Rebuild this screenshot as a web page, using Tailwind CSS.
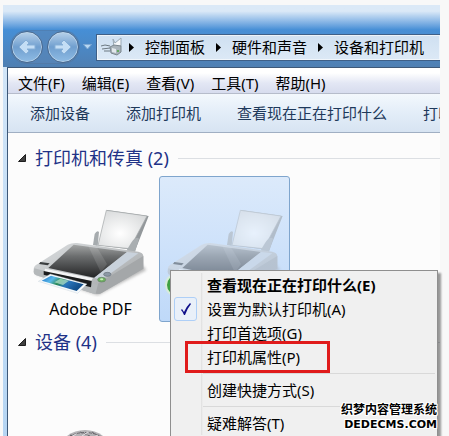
<!DOCTYPE html>
<html lang="zh-CN">
<head>
  <meta charset="UTF-8">
  <meta name="viewport" content="width=device-width, initial-scale=1">
  <title>设备和打印机</title>
  <script src="https://cdn.jsdelivr.net/npm/@tailwindcss/browser@4"></script>
</head>
<body class="h-screen overflow-hidden bg-[#f8f8f8] font-['Noto_Sans','Noto_Sans_CJK_SC',sans-serif] text-[15px] leading-6 text-black">

  <!-- Shared shapes -->
  <svg class="absolute size-0" aria-hidden="true">
    <defs>
      <linearGradient id="top" x1="0" y1="0" x2="0" y2="1">
        <stop offset="0" stop-color="#a3a5a5"/>
        <stop offset="0.35" stop-color="#6c6e6f"/>
        <stop offset="1" stop-color="#232425"/>
      </linearGradient>
      <linearGradient id="side" x1="0" y1="0" x2="1" y2="1">
        <stop offset="0" stop-color="#dcdfe1"/>
        <stop offset="1" stop-color="#9fa2a4"/>
      </linearGradient>
      <radialGradient id="sheet" cx="0.45" cy="0.6" r="0.7">
        <stop offset="0" stop-color="#ffffff"/>
        <stop offset="1" stop-color="#d6d8d9"/>
      </radialGradient>
      <linearGradient id="photo" x1="0" y1="0" x2="1" y2="0.4">
        <stop offset="0" stop-color="#1c6fc4"/>
        <stop offset="0.3" stop-color="#59b7ea"/>
        <stop offset="0.5" stop-color="#2b8a52"/>
        <stop offset="0.7" stop-color="#2a76bd"/>
        <stop offset="1" stop-color="#14508c"/>
      </linearGradient>
      <filter id="soft" x="-10%" y="-30%" width="120%" height="160%"><feGaussianBlur stdDeviation="5"/></filter>
    </defs>
    <symbol id="printer" viewBox="90 99 360 270">
      <path d="M104 300 L290 364 L436 288 L420 270 L120 280Z" fill="#8b8b8b" opacity="0.6" filter="url(#soft)"/>
      <path d="M318 108 L443 126 L402 230 L384 226 L292 214Z" fill="#93989b"/>
      <path d="M316 109 L438 126 L386 224 L291 214Z" fill="url(#sheet)" stroke="#a2a6a8" stroke-width="2"/>
      <path d="M276 213 L281 180 Q288 168 294 174 L290 216Z" fill="#a6abae"/>
      <path d="M376 230 L392 204 Q406 186 414 194 L402 234Z" fill="#a9aeb1"/>
      <path d="M98 286 Q98 276 110 270 L200 212 Q212 206 228 207 L412 233 Q426 236 427 246 L427 284 L300 358 Q288 361 274 358 L106 304 Q98 301 98 294Z" fill="url(#side)"/>
      <path d="M100 283 L288 332 L300 358 Q288 361 274 358 L106 304 Q98 301 98 294Z" fill="#b4b8ba"/>
      <path d="M292 328 L427 246 L427 284 L300 358 Q290 361 284 358Z" fill="#a4a7a9"/>
      <path d="M142 282 L218 212 L378 234 L280 311Z" fill="url(#top)"/>
      <path d="M262 217 L288 220 L318 270 L300 296Z" fill="#ffffff" opacity="0.12"/>
      <path d="M280 311 L378 234 L412 238 L302 318Z" fill="#c9d2dc"/>
      <path d="M132 284 L276 313 L270 321 L130 293Z" fill="#f3f4f5"/>
      <path d="M128 291 L272 321 L270 340 L246 334 L128 302Z" fill="#1b1c1d"/>
      <path d="M148 300 L258 330 L230 358 L112 322Z" fill="#f4f9fc" stroke="#b9c6cf"/>
      <path d="M150 305 L248 331 L227 351 L122 320Z" fill="url(#photo)"/>
      <path d="M178 314 L204 320 L186 333 L160 325Z" fill="#b6e2cf" opacity="0.7"/>
      <path d="M118 264 L146 268 L140 274 L114 270Z" fill="#3b3e40"/>
      <ellipse cx="319" cy="301" rx="11" ry="6" fill="#8c98a5" stroke="#667078" stroke-width="2"/>
      <ellipse cx="302" cy="317" rx="12" ry="7" fill="#70b061" stroke="#64806a" stroke-width="2"/>
      <ellipse cx="302" cy="316" rx="5" ry="3" fill="#c6edb7"/>
    </symbol>
    <symbol id="crumb" viewBox="0 0 5 9">
      <path d="M0 0 L5 4.500 L0 9Z" fill="#000"/>
    </symbol>
    <symbol id="expanded" viewBox="0 0 8 8">
      <path d="M7.500 0.500 V7.500 H0.500Z" fill="#404040" stroke="#1e1e1e"/>
    </symbol>
  </svg>

  <div class="mt-[5px] mr-[9px] ml-[3px] flex h-full flex-col bg-linear-to-b from-[#7f9fc4] via-[#d3e6f8] via-10% to-[#b5d5f3]">

    <!-- Title bar with navigation -->
    <header class="flex h-[62px] shrink-0 items-center bg-linear-to-b from-[#dbe9f7] from-10% via-[#468fd6] via-40% to-[#4f7fb2] pt-[22px] pl-2">
      <nav class="flex w-full items-center" aria-label="导航">
        <div class="flex gap-1 rounded-full bg-[#5a86b5]/60 ring-1 ring-[#55779f]/60">
          <button type="button" aria-label="后退" class="size-8 rounded-full border border-[#49698f] bg-linear-to-b from-[#b9d2ea] via-[#709fcf] to-[#8fbce5] ring-1 ring-[#c3d9ee]/80 ring-inset">
            <svg class="mx-auto size-5" viewBox="0 0 20 20"><path d="M9 3 L2 10 L9 17 L12 14 L10 12 H18 V8 H10 L12 6Z" fill="#c4def5" stroke="#86afd7"/></svg>
          </button>
          <button type="button" aria-label="前进" class="size-8 rounded-full border border-[#49698f] bg-linear-to-b from-[#b9d2ea] via-[#709fcf] to-[#8fbce5] ring-1 ring-[#c3d9ee]/80 ring-inset">
            <svg class="mx-auto size-5" viewBox="0 0 20 20"><path d="M11 3 L18 10 L11 17 L8 14 L10 12 H2 V8 H10 L8 6Z" fill="#c4def5" stroke="#86afd7"/></svg>
          </button>
        </div>
        <button type="button" aria-label="最近的页面" class="px-1">
          <svg class="h-[6px] w-[9px]" viewBox="0 0 9 6"><path d="M0.500 0.500 H8.500 L4.500 5Z" fill="#b7d7f3" stroke="#7ea9d4"/></svg>
        </button>
        <div class="flex h-[27px] min-w-0 flex-1 items-center gap-[11px] border border-r-0 border-[#3e5f87] bg-linear-to-b from-[#cfe0f1] to-[#dce9f6] pl-1 whitespace-nowrap ring-1 ring-white/60 ring-inset">
          <svg class="-mr-1 h-5 w-[21px]" viewBox="0 0 21 20">
            <path d="M12 2 L14 6 L20 1 V9 L13 10Z" fill="#f6f8fa" stroke="#9aa9b5"/>
            <path d="M9 10 L13 8 L20 9 V15 L16 18 L10 16Z" fill="#a9b3ba" stroke="#7b868e"/>
            <path d="M11 11 L15 12 L15 16 L11 15Z" fill="#e2e8ec"/>
            <path d="M0 9 L4 8 L9 9 M1 12 L9 11 M3 14 H9" fill="none" stroke="#6c7881"/>
            <circle cx="17" cy="14" r="1" fill="#4ea443"/>
          </svg>
          <svg class="h-[9px] w-[5px]"><use href="#crumb"/></svg>
          <a href="#">控制面板</a>
          <svg class="h-[9px] w-[5px]"><use href="#crumb"/></svg>
          <a href="#">硬件和声音</a>
          <svg class="h-[9px] w-[5px]"><use href="#crumb"/></svg>
          <a href="#">设备和打印机</a>
        </div>
      </nav>
    </header>

    <div class="ml-1 flex min-h-0 flex-1 flex-col border-t border-l border-[#3d5878] bg-[#fcfcfc]">
      <!-- Menu bar -->
      <div class="flex h-[26px] shrink-0 items-center gap-[17px] border-b border-[#b6bccb] bg-linear-to-b from-white from-20% via-[#e3e7f4] via-60% to-[#d7dcee] pt-1 pl-[10px] whitespace-nowrap">
        <button type="button">文件(F)</button>
        <button type="button">编辑(E)</button>
        <button type="button">查看(V)</button>
        <button type="button">工具(T)</button>
        <button type="button">帮助(H)</button>
      </div>

      <!-- Command bar -->
      <div class="flex h-[39px] shrink-0 items-center gap-9 overflow-hidden border-b border-[#a0afc3] bg-linear-to-b from-[#f3f8fd] via-[#e3edf8] to-[#d7e4f2] pl-[22px] whitespace-nowrap text-[#1e395b]">
        <button type="button" class="shrink-0">添加设备</button>
        <button type="button" class="shrink-0">添加打印机</button>
        <button type="button" class="shrink-0">查看现在正在打印什么</button>
        <button type="button" class="shrink-0">打印</button>
      </div>

      <!-- Device groups -->
      <main class="flex min-h-0 flex-1 flex-col overflow-hidden pt-[7px]">
        <section>
          <div class="flex h-9 items-center gap-[9px] pl-[10px]">
            <svg class="size-2"><use href="#expanded"/></svg>
            <h2 class="text-[18px] text-[#1f3287]">打印机和传真 (2)</h2>
            <hr class="flex-1 border-[#dcdfe3]">
          </div>
          <div class="flex gap-[3px] pl-[17px]">
            <div class="flex h-[146px] w-[131px] flex-col items-center pt-[31px]">
              <svg class="h-[90px] w-[120px] shrink-0"><use href="#printer"/></svg>
              <span class="text-base">Adobe PDF</span>
            </div>
            <div class="relative flex h-[146px] w-[131px] flex-col items-center rounded-[3px] border border-[#7fa5cd] bg-linear-to-b from-[#dceafb] to-[#bfd9f9] pt-[30px]">
              <svg class="h-[90px] w-[120px] shrink-0 opacity-50"><use href="#printer"/></svg>
              <svg class="absolute bottom-6 left-[5px] size-6" viewBox="0 0 24 24">
                <circle cx="12" cy="12" r="11" fill="#3fa142" stroke="#d7ecd9" stroke-width="2"/>
                <path d="M6 12 L11 17 L18 7" fill="none" stroke="#fff" stroke-width="3"/>
              </svg>
            </div>
          </div>
        </section>
        <section>
          <div class="mt-[2px] flex h-9 items-center gap-[9px] pl-[10px]">
            <svg class="size-2"><use href="#expanded"/></svg>
            <h2 class="text-[18px] text-[#1f3287]">设备 (4)</h2>
            <hr class="flex-1 border-[#dcdfe3]">
          </div>
          <div class="pt-[70px] pl-[52px]">
            <svg class="h-10 w-[50px]" viewBox="0 0 50 40">
              <ellipse cx="25" cy="20" rx="25" ry="20" fill="#b4b3b6"/>
              <path d="M6 8 Q25 -3 44 8 M10 5 L18 8 M20 2 L30 6 M32 2 L40 7" fill="none" stroke="#69676c" stroke-dasharray="3 1"/>
              <path d="M8 9 L16 4 M22 6 L28 2 M34 7 L38 5" stroke="#e3e2e5"/>
            </svg>
          </div>
        </section>
      </main>
    </div>
  </div>

  <!-- Context menu of the selected printer -->
  <div role="menu" class="absolute top-[270px] left-[170px] w-[268px] border border-[#8f8f8f] bg-[#f0f0f0] p-[2px] shadow-[3px_3px_2px_rgba(0,0,0,0.4)]">
    <div class="flex flex-col bg-linear-to-r from-[#f0f0f0] from-[28px] via-[#dedede] via-[28px] to-[#f0f0f0] to-[30px]">
      <button type="button" role="menuitem" class="h-6 pl-[34px] text-left font-bold">查看现在正在打印什么(E)</button>
      <button type="button" role="menuitemcheckbox" aria-checked="true" class="flex h-6 items-center gap-[10px] pl-px text-left">
        <span class="flex h-6 w-[23px] items-center justify-center rounded-[3px] border border-[#aecff7] bg-[#e9f0f9]">
          <svg class="size-3" viewBox="0 0 12 12"><path d="M1 7 L2 6 L4 9 Q6 4 10 0 L11 1 Q7 6 5 12 H4 Q3 9 1 7Z" fill="#10108a"/></svg>
        </span>
        设置为默认打印机(A)
      </button>
      <button type="button" role="menuitem" class="h-6 pl-[34px] text-left">打印首选项(G)</button>
      <button type="button" role="menuitem" class="relative h-6 pl-[34px] text-left">
        打印机属性(P)
        <span class="absolute -top-1 left-3 h-8 w-[145px] border-3 border-[#e01b1b]"></span>
      </button>
      <hr class="my-1 ml-[30px] border-[#d9d9d9]">
      <button type="button" role="menuitem" class="h-6 pl-[34px] text-left">创建快捷方式(S)</button>
      <hr class="my-1 ml-[30px] border-[#d9d9d9]">
      <button type="button" role="menuitem" class="h-6 pl-[34px] text-left">疑难解答(T)</button>
    </div>
  </div>

  <!-- Watermark -->
  <div class="absolute right-3 bottom-1 text-right font-bold whitespace-nowrap [text-shadow:1px_0_#fff,-1px_0_#fff,0_1px_#fff,0_-1px_#fff,1px_1px_#fff,-1px_-1px_#fff,1px_-1px_#fff,-1px_1px_#fff]">
    <p class="text-[12px] leading-4">织梦内容管理系统</p>
    <p class="font-['DejaVu_Sans',sans-serif] text-[11px] leading-[14px]">DEDECMS.COM</p>
  </div>
</body>
</html>
